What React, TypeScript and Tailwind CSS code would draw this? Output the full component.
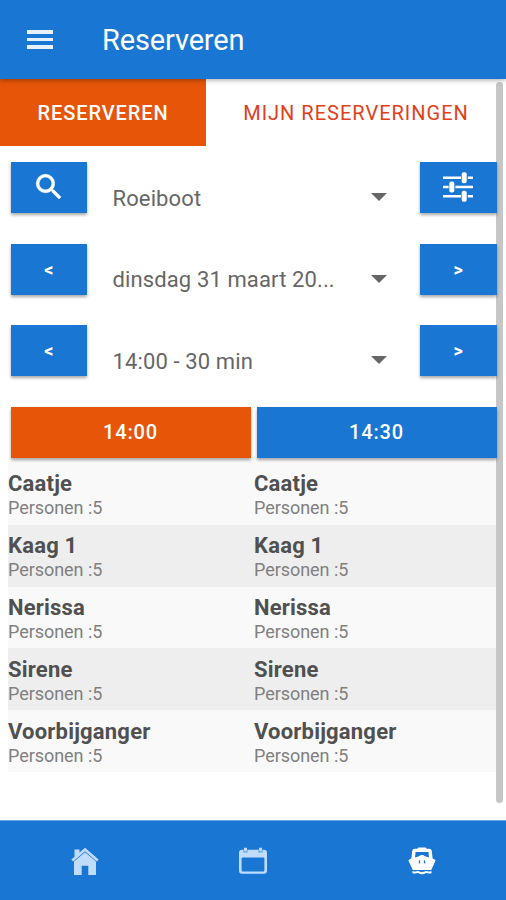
import { useState } from "react";
import type { ReactNode } from "react";
import clsx from "clsx";

const boats = ["Caatje", "Kaag 1", "Nerissa", "Sirene", "Voorbijganger"];
const slots = ["14:00", "14:30"];

function SearchIcon() {
  return (
    <svg width="34" height="34" viewBox="0 0 24 24" fill="currentColor" stroke="currentColor" strokeWidth="0.4" className="-mt-[2px]">
      <path d="M15.5 14h-.79l-.28-.27A6.47 6.47 0 0 0 16 9.5 6.5 6.5 0 1 0 9.5 16c1.61 0 3.09-.59 4.23-1.57l.27.28v.79l5 4.99L20.49 19l-4.99-5zm-6 0a4.5 4.5 0 1 1 0-9 4.5 4.5 0 0 1 0 9z" />
    </svg>
  );
}

function TuneIcon() {
  return (
    <svg width="30" height="30" viewBox="0 0 30 30" fill="currentColor" className="-mt-[2px]">
      <path d="M0 4.500h18v2.600H0zM24.800 4.500H30v2.600h-5.200zM0 13.700h5.600v2.600H0zM12.400 13.700H30v2.600H12.400zM0 22.900h18v2.600H0zM24.800 22.900H30v2.600h-5.200z" />
      <rect x="18.700" y="0.300" width="5" height="11" rx="2" />
      <rect x="6.300" y="9.500" width="5" height="11" rx="2" />
      <rect x="18.700" y="18.700" width="5" height="11" rx="2" />
    </svg>
  );
}

function HomeIcon() {
  return (
    <svg width="28" height="28" viewBox="0 0 28 28" fill="currentColor">
      <path d="M3.500 2.500h5v3L14 .8l13.600 11.600-1.700 2L14 4.300 2.100 14.400l-1.700-2 3.100-2.700z" />
      <path d="M14 5.300 25 14.600V28h-7.700v-9.300h-6.600V28H3V14.600z" />
    </svg>
  );
}

function CalendarIcon() {
  return (
    <svg width="28" height="28" viewBox="0 0 28 28" fill="currentColor">
      <path
        fillRule="evenodd"
        d="M3 2.800h22a3 3 0 0 1 3 3v18a3 3 0 0 1-3 3H3a3 3 0 0 1-3-3v-18a3 3 0 0 1 3-3zM3.600 10.600a1 1 0 0 0-1 1v11.800a1 1 0 0 0 1 1h20.800a1 1 0 0 0 1-1V11.600a1 1 0 0 0-1-1z"
      />
      <path d="M5 .8h3v3H5zM20 .8h3v3h-3z" />
      <path d="M4.400 3h1v1.600h2.200V3h1v2.600H4.400zM19.400 3h1v1.600h2.200V3h1v2.600h-4.200z" fill="#1976d2" opacity="0.6" />
    </svg>
  );
}

function BoatIcon() {
  return (
    <svg width="28" height="28" viewBox="0 0 28 28" fill="currentColor">
      <path
        fillRule="evenodd"
        d="M9.500 1.800Q9.700.5 11 .5h6q1.300 0 1.500 1.300h2.700q2.300 0 2.600 2.200l.8 7.600 2.100.8q1.200.5.7 1.700L23.200 23H4.800L.600 14.100q-.5-1.200.7-1.700l2.100-.8L4.200 4q.3-2.200 2.600-2.200zM7.600 5 7 10.400 11 9.200Q14 7 17 9.200l4 1.200L20.400 5zM10.800 13.700v3l1.300-.6v-3zM15.900 13.100v3l1.300.6v-3z"
      />
      <path d="M4.500 24q3 1 5.500.1 4 1.700 8 0 2.500.9 5.500-.1v2.200q-3 .5-5.500-.2-4 2.600-8 0-2.500.7-5.500.2z" />
    </svg>
  );
}

function SquareButton({ children }: { children: ReactNode }) {
  return (
    <button className="relative z-10 w-[76.500px] h-[51px] shrink-0 flex items-center justify-center bg-[#1976d2] text-white text-[18px] font-bold shadow-[0_2px_3px_rgba(0,0,0,0.35)]">
      {children}
    </button>
  );
}

function SelectRow({ left, value, right }: { left: ReactNode; value: string; right: ReactNode }) {
  return (
    <div className="flex h-[81.600px] items-start">
      <SquareButton>{left}</SquareButton>
      <div className="flex-1 flex items-center justify-between h-[51px] mt-[10.500px] pl-[25.500px] pr-[33px] text-[22px] tracking-[0.120px] text-[#666]">
        <span className="whitespace-nowrap">{value}</span>
        <svg width="16" height="8" viewBox="0 0 16 8" className="-mt-[2px]" fill="#666">
          <path d="M0 0h16L8 8z" />
        </svg>
      </div>
      <SquareButton>{right}</SquareButton>
    </div>
  );
}

export default function App() {
  const [slot, setSlot] = useState("14:00");

  return (
    <div className="relative w-[506px] h-[900px] overflow-hidden bg-white flex flex-col font-[Roboto,sans-serif]">
      {/* Top Bar */}
      <header className="h-[79px] shrink-0 bg-[#1976d2] flex items-center pt-[2px] pl-[27px] text-white shadow-[0_1px_5px_rgba(0,0,0,0.35)] z-10">
        <button className="w-[26px] -mt-[2px] flex flex-col gap-[4px]">
          <span className="h-[3.500px] bg-white/90" />
          <span className="h-[3.500px] bg-white/90" />
          <span className="h-[3.500px] bg-white/90" />
        </button>
        <h1 className="ml-[49px] text-[29px] tracking-[-0.150px] leading-none">Reserveren</h1>
      </header>

      {/* Tabs */}
      <div className="flex h-[67px] shrink-0 text-[20px] tracking-[1px]">
        <button className="w-[206px] bg-[#e65508] text-white font-medium tracking-[0.900px]">RESERVEREN</button>
        <button className="w-[300px] text-[#e0401a]">MIJN RESERVERINGEN</button>
      </div>

      <main className="flex-1 pt-[16px]">
        <div className="pl-[10.500px] pr-[9.500px]">
          <SelectRow left={<SearchIcon />} value="Roeiboot" right={<TuneIcon />} />
          <SelectRow left="<" value="dinsdag 31 maart 20..." right=">" />
          <SelectRow left="<" value="14:00 - 30 min" right=">" />
        </div>

        {/* Time slots */}
        <div className="flex gap-[6px] pl-[10.500px] pr-[9.500px]">
          {slots.map((s) => (
            <button
              key={s}
              onClick={() => setSlot(s)}
              className={clsx(
                "relative z-10 flex-1 h-[51px] text-white text-[20px] font-medium tracking-[0.900px] shadow-[0_2px_3px_rgba(0,0,0,0.35)]",
                slot === s ? "bg-[#e65508]" : "bg-[#1976d2]"
              )}
            >
              {s}
            </button>
          ))}
        </div>

        {/* Boats per slot */}
        <div className="ml-[8px] mr-[10px] pt-[5px] bg-[#f9f9f9]">
          {boats.map((boat) => (
            <div key={boat} className="grid grid-cols-[246px_1fr] h-[61.900px] even:bg-[#eee]">
              {slots.map((s) => (
                <div key={s} className="pt-[7.200px]">
                  <p className="text-[22px] leading-[27px] tracking-[0.200px] font-bold text-[#505050]">{boat}</p>
                  <p className="text-[18px] leading-[21px] tracking-[-0.050px] text-[#808080]">Personen :5</p>
                </div>
              ))}
            </div>
          ))}
        </div>
      </main>

      {/* Scrollbar */}
      <div className="absolute left-[496px] top-[82px] w-[7px] h-[721px] rounded-full bg-[#c6c6c6]" />

      {/* Bottom Tab Bar */}
      <nav className="h-[80px] shrink-0 bg-[#1976d2] border-t border-[#6ba8e3] grid grid-cols-3 place-items-center pl-[1px] text-[#bfdcfa]">
        <button><HomeIcon /></button>
        <button><CalendarIcon /></button>
        <button className="text-white"><BoatIcon /></button>
      </nav>
    </div>
  );
}
